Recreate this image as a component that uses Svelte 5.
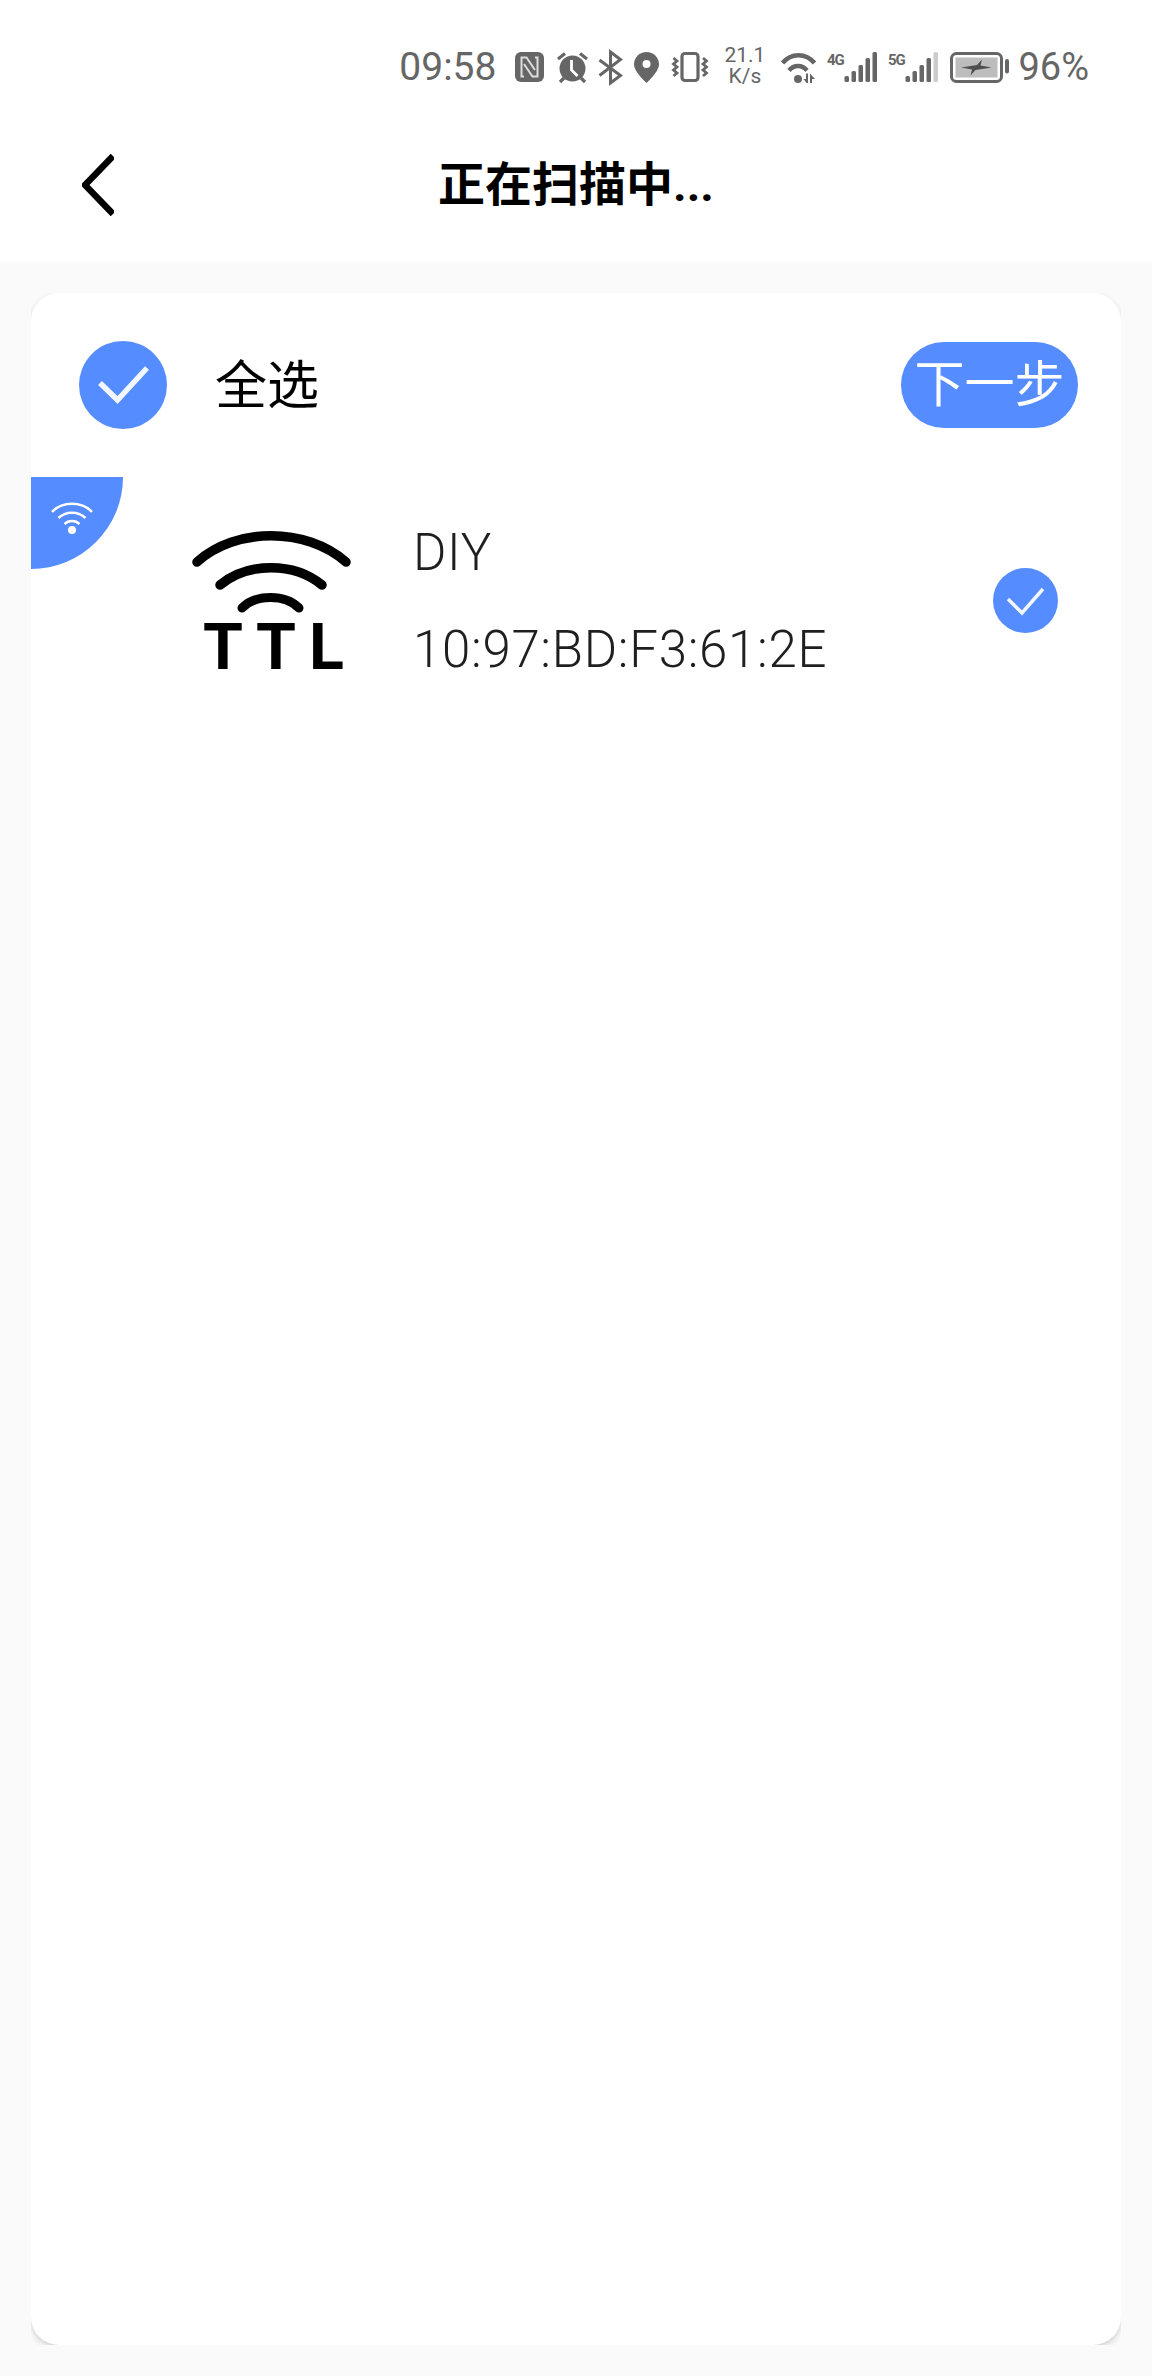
<script>
  const bars = [
    { x: 17.5, h: 6 },
    { x: 24.5, h: 11 },
    { x: 31.5, h: 17 },
    { x: 38.5, h: 24 },
    { x: 45.5, h: 30 }
  ];
</script>

<div class="page">
  <div class="topbar">
    <div class="status">
      <span class="time">09:58</span>

      <svg class="nfc" width="29" height="30" viewBox="0 0 29 30">
        <rect width="29" height="30" rx="6" fill="#666" />
        <path d="M9 24.500H6.500V5.500h5L20 18" fill="none" stroke="#ddd" stroke-width="2" />
        <path d="M20 5.500h2.500v19h-5L9 12" fill="none" stroke="#ddd" stroke-width="2" />
      </svg>

      <svg class="alarm" width="33" height="31" viewBox="0 0 33 31">
        <circle cx="16.500" cy="16.500" r="13" fill="#666" />
        <path d="M15.500 8v10l6 6" fill="none" stroke="#fff" stroke-width="2.800" />
        <path d="M2 7l7-5.500M31 7l-7-5.500M4 30l4-4M29 30l-4-4" fill="none" stroke="#666" stroke-width="3.200" />
      </svg>

      <svg class="bt" width="25" height="33" viewBox="0 0 25 33">
        <path d="M1.500 9l21 15.500-10 7.500V1l10 7.500L1.500 24.500" fill="none" stroke="#666" stroke-width="3" />
      </svg>

      <svg class="pin" width="25" height="31" viewBox="0 0 25 31">
        <path d="M12.500 0C5.600 0 0 5.500 0 12.300 0 20 12.500 31 12.500 31S25 20 25 12.300C25 5.500 19.400 0 12.500 0Z" fill="#666" />
        <circle cx="12.500" cy="12" r="4" fill="#fff" />
      </svg>

      <svg class="vib" width="36" height="30" viewBox="0 0 36 30">
        <rect x="10" y="1.500" width="16" height="27" rx="3" fill="none" stroke="#666" stroke-width="3.200" />
        <path d="M1.500 6l3.500 3-3.500 3 3.500 3-3.500 3 3.500 3-3.500 3" fill="none" stroke="#666" stroke-width="2.800" />
        <path d="M31 6l3.500 3-3.500 3 3.500 3-3.500 3 3.500 3-3.500 3" fill="none" stroke="#666" stroke-width="2.800" />
      </svg>

      <div class="speed"><span>21.1</span><span>K/s</span></div>

      <svg class="wifi" width="36" height="31" viewBox="0 0 36 31">
        <path d="M1.500 11C10 0.500 25 0.500 33.500 11" fill="none" stroke="#666" stroke-width="4.500" />
        <path d="M8 18.500c5-6 13-6 18 0" fill="none" stroke="#666" stroke-width="4.500" />
        <circle cx="17" cy="27" r="4" fill="#666" />
        <path d="M27 21.500v9.500h-1.500l-3-4h2.500v-5.500zM29 21.500l5 5.500h-3v4h-2z" fill="#666" />
      </svg>

      <svg class="sig" width="49" height="30" viewBox="0 0 49 30">
        <text class="net" x="0" y="13">4G</text>
        {#each bars as b}
          <rect x={b.x} y={30 - b.h} width="4.500" height={b.h} rx="1.500" fill="#666" />
        {/each}
      </svg>

      <svg class="sig five" width="49" height="30" viewBox="0 0 49 30">
        <text class="net" x="0" y="13">5G</text>
        {#each bars as b, i}
          <rect x={b.x} y={30 - b.h} width="4.500" height={b.h} rx="1.500" fill={i === 4 ? '#ccc' : '#666'} />
        {/each}
      </svg>

      <svg class="batt" width="59" height="31" viewBox="0 0 59 31">
        <rect x="1.500" y="1.500" width="50" height="28" rx="5" fill="none" stroke="#666" stroke-width="3" />
        <rect x="5.500" y="5.500" width="42" height="20" fill="#bdbdbd" />
        <path d="M11 15.500l16-2.500 5-5.500-1.500 6 11 2-16 2.500-5 5.500 1.500-6z" fill="#4f4f4f" />
        <rect x="55" y="7" width="4" height="14.500" rx="2" fill="#666" />
      </svg>

      <span class="pct">96%</span>
    </div>

    <header class="nav">
      <svg class="back" width="32" height="62" viewBox="0 0 32 62">
        <path d="M31 2L3 31l28 29" fill="none" stroke="#000" stroke-width="6.500" />
      </svg>
      <h1>正在扫描中...</h1>
      <span></span>
    </header>
  </div>

  <div class="cardclip">
    <main class="card">
      <div class="allrow">
        <svg class="allcheck" width="88" height="88" viewBox="0 0 88 88">
          <circle cx="44" cy="44" r="44" fill="#558cff" />
          <path d="M21 42l17.500 17L68 27" fill="none" stroke="#fff" stroke-width="5.500" opacity="0.92" />
        </svg>
        <span class="alltext">全选</span>
        <button class="next">下一步</button>
      </div>

      <div class="badge">
        <svg width="44" height="34" viewBox="0 0 44 34">
          <path d="M2 12C12 1 32 1 42 12" fill="none" stroke="#fff" stroke-width="2.500" />
          <path d="M8.500 18c7-7 20-7 27 0" fill="none" stroke="#fff" stroke-width="2.500" />
          <path d="M14.500 24c4-4 11-4 15 0" fill="none" stroke="#fff" stroke-width="2.500" />
          <circle cx="22" cy="30" r="4" fill="#fff" />
        </svg>
      </div>

      <div class="device">
        <svg class="logo" width="160" height="142" viewBox="0 0 160 142">
          <path d="M7 32C46 -3 116 -3 156 32" fill="none" stroke="#000" stroke-width="9.500" stroke-linecap="round" />
          <path d="M30 55C58 32 104 32 132 55" fill="none" stroke="#000" stroke-width="9.500" stroke-linecap="round" />
          <path d="M52 78C66 64 95 64 109 78" fill="none" stroke="#000" stroke-width="9" stroke-linecap="round" />
          <text class="ttl" x="13" y="139">T</text>
          <text class="ttl" x="66" y="139">T</text>
          <text class="ttl" x="119" y="139">L</text>
        </svg>
        <div class="info">
          <div class="name">DIY</div>
          <div class="mac">10:97:BD:F3:61:2E</div>
        </div>
        <svg class="itemcheck" width="65" height="65" viewBox="0 0 65 65">
          <circle cx="32.500" cy="32.500" r="32.500" fill="#558cff" />
          <path d="M15 31l14 14 21-24" fill="none" stroke="#fff" stroke-width="3.500" opacity="0.92" />
        </svg>
      </div>
    </main>
  </div>
</div>

<style>
  :global(body) {
    margin: 0;
    background: #fafafa;
  }

  .page {
    width: 1152px;
    height: 2376px;
    background: #fafafa;
    font-family: "Roboto", "Noto Sans CJK SC", sans-serif;
    overflow: hidden;
  }

  .topbar {
    height: 262px;
    background: #fff;
    display: flex;
    flex-direction: column;
  }

  .status {
    height: 90px;
    padding-right: 63px;
    display: flex;
    justify-content: flex-end;
    align-items: center;
    color: #666;
    box-sizing: border-box;
    padding-top: 44px;
  }

  .status svg {
    flex: none;
    display: block;
    overflow: visible;
  }

  .time {
    font-size: 39px;
    line-height: 40px;
    color: #666;
  }

  .pct {
    font-size: 38px;
    line-height: 40px;
    color: #666;
  }

  .nfc { margin-left: 19px; }
  .alarm { margin-left: 12px; }
  .bt { margin-left: 9px; }
  .pin { margin-left: 11px; }
  .vib { margin-left: 13px; }
  .speed {
    margin-left: 16px;
    width: 41px;
    display: flex;
    flex-direction: column;
    align-items: center;
    font-size: 21px;
    line-height: 21px;
    color: #666;
    margin-top: -2px;
  }
  .wifi { margin-left: 16px; }
  .sig { margin-left: 10px; }
  .five { margin-left: 12px; }
  .batt { margin-left: 13px; }
  .pct { margin-left: 9px; }

  .net {
    font-family: "Roboto", sans-serif;
    font-weight: 700;
    font-size: 15px;
    letter-spacing: -1px;
    fill: #666;
  }

  .nav {
    flex: 1;
    display: grid;
    grid-template-columns: 1fr auto 1fr;
    align-items: center;
    padding: 18px 82px 0;
    box-sizing: border-box;
  }

  .back {
    display: block;
  }

  h1 {
    margin: 0;
    font-size: 47px;
    line-height: 60px;
    font-weight: 700;
    color: #000;
  }

  .cardclip {
    margin: 31px 31px 0;
    height: 2052px;
    overflow: hidden;
  }

  .card {
    position: relative;
    height: 100%;
    background: #fff;
    border-radius: 28px;
    box-shadow: 0 3px 6px rgba(0, 0, 0, 0.16);
    box-sizing: border-box;
  }

  .allrow {
    display: flex;
    align-items: center;
    height: 88px;
    padding: 48px 43px 0 48px;
  }

  .allcheck { display: block; flex: none; }

  .alltext {
    margin-left: 48px;
    padding-top: 3px;
    font-size: 52px;
    line-height: 64px;
    color: #000;
  }

  .next {
    margin-left: auto;
    width: 177px;
    height: 86px;
    border: 0;
    padding: 0;
    border-radius: 43px;
    background: #558cff;
    color: #fff;
    font-family: inherit;
    font-size: 50px;
    line-height: 1;
  }

  .badge {
    position: absolute;
    left: 0;
    top: 184px;
    width: 92px;
    height: 92px;
    background: #558cff;
    border-bottom-right-radius: 92px;
    box-sizing: border-box;
    padding: 23px 0 0 19px;
  }

  .badge svg { display: block; }

  .device {
    display: flex;
    align-items: center;
    margin-top: 101px;
    height: 142px;
    padding: 0 63px 0 159px;
  }

  .logo { display: block; flex: none; overflow: visible; }

  .ttl {
    font-family: "Roboto", sans-serif;
    font-weight: 700;
    font-size: 64.5px;
    fill: #000;
  }

  .info {
    margin-left: 63px;
    display: flex;
    flex-direction: column;
    gap: 37px;
    color: #1f1f1f;
    font-size: 51px;
    line-height: 60px;
    font-weight: 300;
    letter-spacing: 0.7px;
  }

  .itemcheck {
    display: block;
    margin-left: auto;
    margin-top: -2px;
    flex: none;
  }
</style>
